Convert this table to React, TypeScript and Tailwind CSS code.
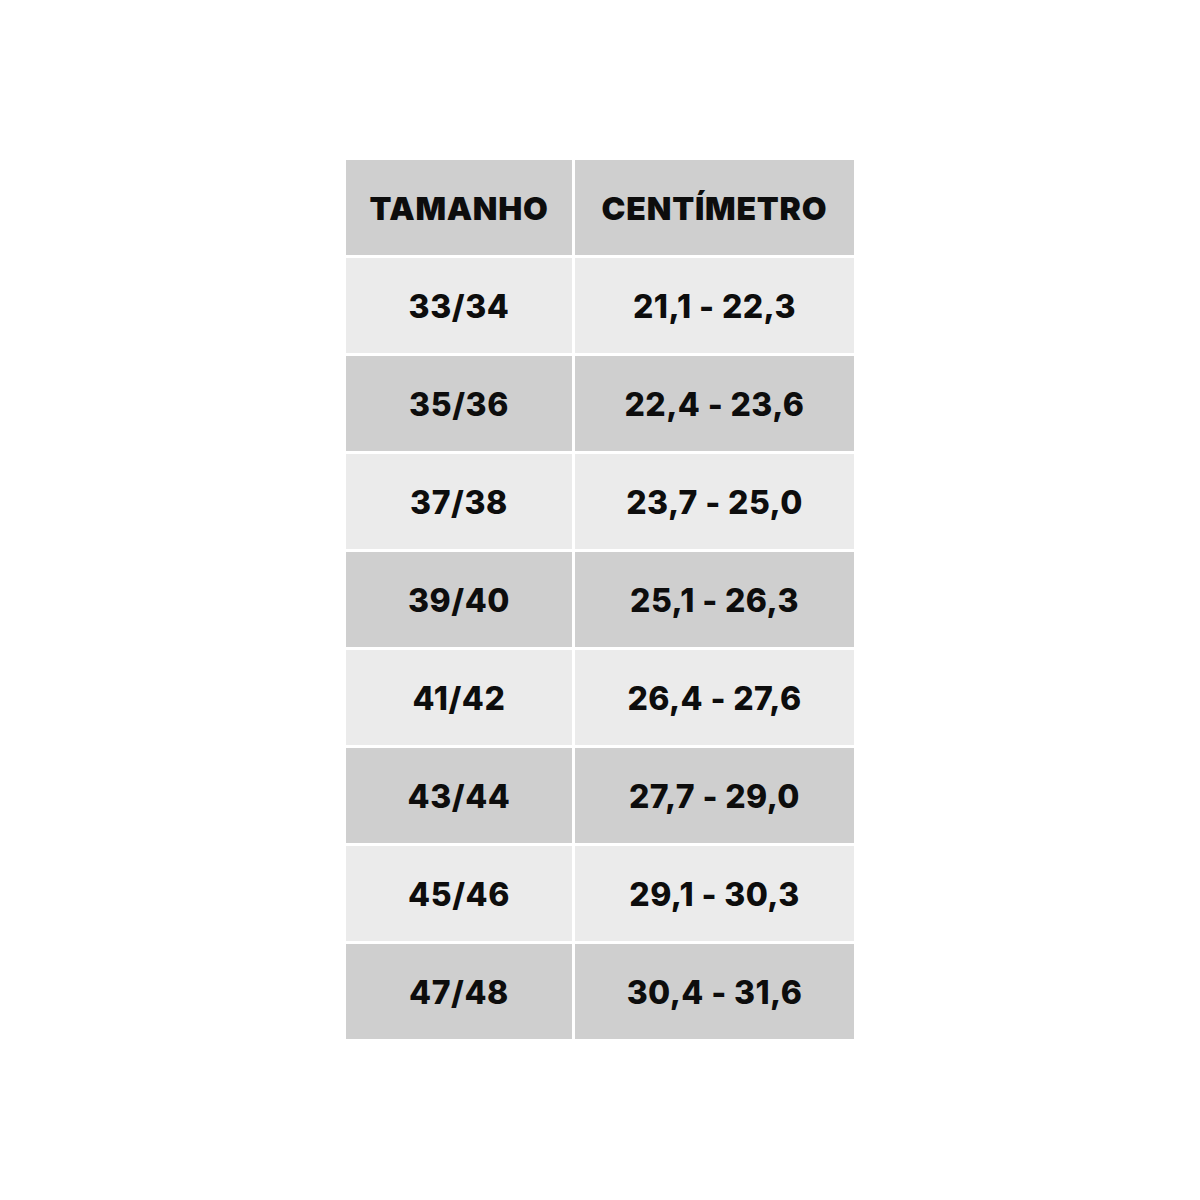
const rows: [string, string][] = [
  ["33/34", "21,1 - 22,3"],
  ["35/36", "22,4 - 23,6"],
  ["37/38", "23,7 - 25,0"],
  ["39/40", "25,1 - 26,3"],
  ["41/42", "26,4 - 27,6"],
  ["43/44", "27,7 - 29,0"],
  ["45/46", "29,1 - 30,3"],
  ["47/48", "30,4 - 31,6"],
];

export default function App() {
  return (
    <div className="flex h-[1200px] w-[1200px] justify-center bg-white pt-[160px] font-['Inter',sans-serif] text-[#0d0d0d]">
      <div className="grid h-fit grid-cols-[226px_279px] gap-[3px]">
        <div className="flex h-[95px] items-center justify-center bg-[#cfcfcf] pt-[3px] text-[32px] font-black tracking-[0.7px]">
          TAMANHO
        </div>
        <div className="flex h-[95px] items-center justify-center bg-[#cfcfcf] pt-[3px] text-[32px] font-black tracking-[0.8px]">
          CENTÍMETRO
        </div>
        {rows.map(([size, cm], i) => {
          const bg = i % 2 === 0 ? "bg-[#ebebeb]" : "bg-[#cfcfcf]";
          return [
            <div
              key={size}
              className={`flex h-[95px] items-center justify-center pt-[3px] text-[32px] font-extrabold tracking-[0.6px] ${bg}`}
            >
              {size}
            </div>,
            <div
              key={cm}
              className={`flex h-[95px] items-center justify-center pt-[3px] text-[32px] font-extrabold tracking-[0.4px] ${bg}`}
            >
              {cm}
            </div>,
          ];
        })}
      </div>
    </div>
  );
}
